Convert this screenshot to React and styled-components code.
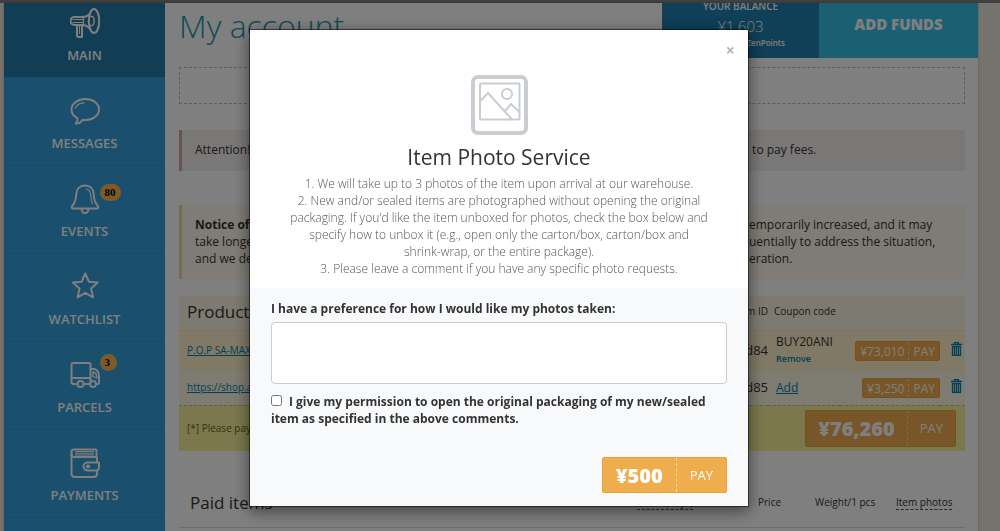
import React, { useState } from "react";
import styled, { createGlobalStyle } from "styled-components";

const MENU = [
  { name: "Main", icon: "horn", active: true },
  { name: "Messages", icon: "bubble" },
  { name: "Events", icon: "bell", badge: "80" },
  { name: "Watchlist", icon: "star" },
  { name: "Parcels", icon: "truck", badge: "3", raised: true },
  { name: "Payments", icon: "wallet" },
];

const ICONS = {
  horn: (
    <>
      <ellipse cx="24" cy="13" rx="5.2" ry="12" />
      <ellipse cx="21.5" cy="13" rx="2.6" ry="4.6" strokeWidth="1.4" />
      <path d="M20.500 4.500C19 7.500 16 9 12 9H4.500a2.500 2.500 0 0 0 0 8H13c3 .3 5.800 2 7.500 4.500" />
      <path d="M2.500 11.500h11M2.500 14.500h11M13.500 9v8" strokeWidth="1.2" />
      <path d="M7 17.500v10a1.500 1.500 0 0 0 1.500 1.500h3.500v-11" />
      <path d="M9.500 18v8" strokeWidth="1" />
    </>
  ),
  bubble: (
    <>
      <path d="M15.500 3C8 3 1.500 7.500 1.500 13.500c0 4 2.500 7 6 8.700.3 1.800-.2 3.600-1.800 5.300 3 .2 5.300-1.400 6.800-3.800 1 .2 2 .3 3 .3C23 24 29 19.500 29 13.500S23 3 15.500 3Z" />
      <path d="M5.500 12.500c.5-3.500 4.500-5.500 9-5.700" strokeWidth="1.300" />
    </>
  ),
  bell: (
    <>
      <path d="M15 1.500C9.500 1.500 6.500 5 6.300 10c-.2 5.500-.8 8.500-4.300 12.200-.8 1 0 2.300 1 2.300h24c1 0 1.800-1.300 1-2.300C24.500 18.500 23.900 15.500 23.700 10 23.500 5 20.500 1.500 15 1.500Z" />
      <path d="M11.500 25c.3 3 1.500 4.200 3.500 4.200s3.200-1.200 3.500-4.200" />
      <path d="M16 5c3 .5 4.500 2.500 4.700 6 .1 4 .6 6.500 2 9" strokeWidth="1.200" />
    </>
  ),
  star: <path d="m15.300 1.500 3.600 8.200 8.900.9-6.700 6 2 8.800-7.800-4.600-7.700 4.600 1.900-8.800-6.700-6 8.900-.9Z" />,
  truck: (
    <>
      <path d="M6.500 24H3.500a2 2 0 0 1-2-2V4.500A1.500 1.500 0 0 1 3 3h16a1.500 1.500 0 0 1 1.500 1.500V22M14 24h5" />
      <path d="M1.500 18h19" />
      <path d="M20.500 9h3.500c3 0 5 3.500 5 7.500v6c0 1-.5 1.500-1.300 1.500H27" />
      <path d="M23 12v4.500l4 1.500c-.2-3.500-1.500-5.800-4-6Z" strokeWidth="1.300" />
      <circle cx="10.500" cy="24" r="3" />
      <circle cx="23" cy="24" r="3" />
    </>
  ),
  wallet: (
    <>
      <path d="M3.500 1.500h22a1 1 0 0 1 1 1V9H4C2.500 9 1.500 7.500 1.500 6V4c0-1.500 1-2.500 2-2.500Z" />
      <path d="M5 3.500h19M5 5.200h19M5 7h19" strokeWidth="1.100" />
      <path d="M1.500 5v20.500c0 2 1.500 3.500 3.500 3.500h18.500c2 0 3.500-1.500 3.500-3.500v-3M26.500 9c.4.500.5 1 .5 2v3" />
      <path d="M29 14.500H17.500a4 4 0 0 0 0 8H27c1.500-.5 2-1.500 2-3Z" />
      <circle cx="18" cy="18.500" r="1.100" />
    </>
  ),
};

const TrashIcon = () => (
  <svg width="11" height="14" viewBox="0 0 11 14" fill="none" stroke="currentColor" strokeWidth="1.3">
    <path d="M0 2.500h11M3.500 2V.5h4V2" />
    <path d="M1.500 4v9.500h8V4M3.500 4v9M5.500 4v9M7.500 4v9" />
    <path d="M1 4.500h9" />
  </svg>
);

const PhotoIcon = () => (
  <svg width="57" height="60" viewBox="0 0 57 60" fill="none" stroke="#c9cdd2">
    <rect x="2" y="2" width="53" height="56" rx="5" strokeWidth="4" />
    <rect x="9" y="8.500" width="39.500" height="36" rx="1" strokeWidth="2" />
    <path d="M9 26.500 17 18l24 26.500M34 36l6-7 8.500 8" strokeWidth="2" />
    <circle cx="36" cy="19" r="5" strokeWidth="2" />
  </svg>
);

const PayButton = ({ size, price, label }) => (
  <PayBtn type="button" $size={size} aria-label={label}>
    <PayPrice $size={size}>{price}</PayPrice>
    <PayText $size={size}>PAY</PayText>
  </PayBtn>
);

const App = () => {
  const [comment, setComment] = useState("");
  const [allowed, setAllowed] = useState(false);

  return (
    <Page>
      <GlobalStyle />
      <TopBar />
      <Wrap>
        <SideMenu>
          {MENU.map((item) => (
            <MenuItem key={item.name} href="#" $active={item.active}>
              <IconBox>
                <MenuIcon viewBox="0 0 30 30">{ICONS[item.icon]}</MenuIcon>
                {item.badge && <Badge $raised={item.raised}>{item.badge}</Badge>}
              </IconBox>
              <MenuName>{item.name}</MenuName>
            </MenuItem>
          ))}
        </SideMenu>

        <Main>
          <Header>
            <PageTitle>My account</PageTitle>
            <Balance>
              <BalanceName>YOUR BALANCE</BalanceName>
              <BalanceSum>¥1,603</BalanceSum>
              <BalancePoints>and also 100 ZenPoints</BalancePoints>
            </Balance>
            <AddFunds type="button">ADD FUNDS</AddFunds>
          </Header>

          <Content>
            <DashedBox />

            <Alert>
              <AlertLine>
                <span>Attention!</span>
                <span>&nbsp;to pay fees.</span>
              </AlertLine>
            </Alert>

            <Alert $notice>
              <AlertLine>
                <b>Notice of</b>
                <span>emporarily increased, and it may</span>
              </AlertLine>
              <AlertLine>
                <span>take longer</span>
                <span>uentially to address the situation,</span>
              </AlertLine>
              <AlertLine>
                <span>and we deeply</span>
                <span>eration.</span>
              </AlertLine>
            </Alert>

            <Products>
              <colgroup>
                <col />
                <col width="60" />
                <col width="72" />
                <col width="100" />
                <col width="25" />
              </colgroup>
              <thead>
                <tr>
                  <HeadCell $title>Products</HeadCell>
                  <HeadCell $right>Item ID</HeadCell>
                  <HeadCell $coupon>Coupon code</HeadCell>
                  <HeadCell />
                  <HeadCell />
                </tr>
              </thead>
              <tbody>
                <Row $tall>
                  <Cell>
                    <ItemLink href="#">P.O.P SA-MAXIMUM</ItemLink>
                  </Cell>
                  <Cell $right>d84</Cell>
                  <Cell>
                    <Coupon>BUY20ANI</Coupon>
                    <SmallLink href="#">Remove</SmallLink>
                  </Cell>
                  <Cell $right $action>
                    <PayButton size="small" price="¥73,010" label="Pay ¥73,010" />
                  </Cell>
                  <Cell $right $action>
                    <IconButton type="button" aria-label="Delete">
                      <TrashIcon />
                    </IconButton>
                  </Cell>
                </Row>
                <Row>
                  <Cell>
                    <ItemLink href="#">https://shop.asmodee</ItemLink>
                  </Cell>
                  <Cell $right>d85</Cell>
                  <Cell>
                    <AddLink href="#">Add</AddLink>
                  </Cell>
                  <Cell $right $action>
                    <PayButton size="small" price="¥3,250" label="Pay ¥3,250" />
                  </Cell>
                  <Cell $right $action>
                    <IconButton type="button" aria-label="Delete">
                      <TrashIcon />
                    </IconButton>
                  </Cell>
                </Row>
              </tbody>
              <tfoot>
                <tr>
                  <TotalCell colSpan="5">
                    <Total>
                      <span>[*] Please pay</span>
                      <PayButton size="large" price="¥76,260" label="Pay ¥76,260" />
                    </Total>
                  </TotalCell>
                </tr>
              </tfoot>
            </Products>

            <Paid>
              <colgroup>
                <col />
                <col width="54" />
                <col width="126" />
                <col width="121" />
                <col width="57" />
                <col width="81" />
                <col width="69" />
              </colgroup>
              <thead>
                <tr>
                  <PaidHead $title>Paid items</PaidHead>
                  <PaidHead>Name</PaidHead>
                  <PaidHead>Status</PaidHead>
                  <PaidHead>
                    <Hint>Items (days)</Hint>
                  </PaidHead>
                  <PaidHead>Price</PaidHead>
                  <PaidHead>Weight/1 pcs</PaidHead>
                  <PaidHead>
                    <Hint>Item photos</Hint>
                  </PaidHead>
                </tr>
              </thead>
            </Paid>
          </Content>
        </Main>
      </Wrap>

      <Backdrop>
        <Modal role="dialog" aria-labelledby="photo-title">
          <ModalTop>
            <CloseButton type="button" aria-label="Close">
              ×
            </CloseButton>
            <PhotoIcon />
            <ModalTitle id="photo-title">Item Photo Service</ModalTitle>
            <ModalText>
              1. We will take up to 3 photos of the item upon arrival at our warehouse.
              <br />
              2. New and/or sealed items are photographed without opening the original
              <br />
              packaging. If you'd like the item unboxed for photos, check the box below and
              <br />
              specify how to unbox it (e.g., open only the carton/box, carton/box and
              <br />
              shrink-wrap, or the entire package).
              <br />
              3. Please leave a comment if you have any specific photo requests.
            </ModalText>
          </ModalTop>
          <ModalForm onSubmit={(e) => e.preventDefault()}>
            <Label htmlFor="comment">I have a preference for how I would like my photos taken:</Label>
            <TextArea id="comment" value={comment} onChange={(e) => setComment(e.target.value)} />
            <Label>
              <Check type="checkbox" checked={allowed} onChange={(e) => setAllowed(e.target.checked)} />I give my
              permission to open the original packaging of my new/sealed item as specified in the above comments.
            </Label>
            <ModalFooter>
              <PayButton size="medium" price="¥500" label="Pay ¥500" />
            </ModalFooter>
          </ModalForm>
        </Modal>
      </Backdrop>
    </Page>
  );
};

const GlobalStyle = createGlobalStyle`
  * {
    box-sizing: border-box;
  }
  body {
    margin: 0;
    background-color: #ebe6dc;
    color: #333;
    font-family: "Open Sans", sans-serif;
    font-size: 12px;
    line-height: 17px;
  }
  button {
    font-family: inherit;
    cursor: pointer;
  }
`;

const Page = styled.div`
  height: 100vh;
  overflow: hidden;
`;

const TopBar = styled.div`
  height: 3px;
  background-color: #85807c;
`;

const Wrap = styled.div`
  display: flex;
  min-height: 100vh;
  margin: 0 22px 0 4px;
  background-color: #fff;
  box-shadow: 0 0 2px rgba(0, 0, 0, 0.3);
`;

const SideMenu = styled.nav`
  width: 161px;
  flex-shrink: 0;
  background-color: #349fdc;
`;

const MenuItem = styled.a`
  display: flex;
  flex-direction: column;
  align-items: center;
  justify-content: flex-end;
  gap: 7px;
  height: ${(props) => (props.$active ? "75px" : "88px")};
  padding-bottom: 12px;
  border-bottom: 1px solid #2f97d2;
  background-color: ${(props) => (props.$active ? "#237da9" : "transparent")};
  color: #fff;
  text-decoration: none;
`;

const IconBox = styled.div`
  position: relative;
  height: 30px;
`;

const MenuIcon = styled.svg`
  display: block;
  width: 30px;
  height: 30px;
  fill: none;
  stroke: #fff;
  stroke-width: 2;
  stroke-linejoin: round;
`;

const Badge = styled.span`
  position: absolute;
  top: ${(props) => (props.$raised ? "-6px" : "0")};
  left: 30px;
  min-width: 17px;
  padding: 0 5px;
  border-radius: 9px;
  background-color: #ffb452;
  color: #000;
  font-family: "Liberation Serif", serif;
  font-size: 11px;
  font-weight: bold;
`;

const MenuName = styled.span`
  font-size: 13px;
  font-weight: 600;
  line-height: 20px;
  text-transform: uppercase;
`;

const Main = styled.main`
  flex: 1;
  min-width: 0;
`;

const Header = styled.header`
  display: flex;
  height: 55px;
  padding-left: 14px;
`;

const PageTitle = styled.h1`
  flex: 1;
  margin: 0;
  color: #1d93a8;
  font-size: 32px;
  font-weight: 300;
  line-height: 46px;
`;

const Balance = styled.div`
  display: flex;
  flex-direction: column;
  align-items: center;
  justify-content: flex-end;
  width: 157px;
  padding-bottom: 9px;
  overflow: hidden;
  background-color: #207eb0;
  color: #fff;
  white-space: nowrap;
`;

const BalanceName = styled.span`
  flex-shrink: 0;
  font-size: 10px;
  font-weight: 600;
  line-height: 12px;
`;

const BalanceSum = styled.span`
  flex-shrink: 0;
  margin: 4px 0 1px;
  font-size: 15px;
  font-weight: 300;
  line-height: 20px;
`;

const BalancePoints = styled.span`
  flex-shrink: 0;
  font-size: 8px;
  font-weight: 600;
  line-height: 12px;
`;

const AddFunds = styled.button`
  width: 159px;
  padding: 0 0 13px;
  border: 0;
  background-color: #36bee4;
  color: #fff;
  font-size: 15px;
  font-weight: 800;
`;

const Content = styled.div`
  padding: 9px 13px 0 14px;
`;

const DashedBox = styled.div`
  height: 37px;
  border: 1px dashed #bbb;
`;

const Alert = styled.div`
  margin-top: ${(props) => (props.$notice ? "34px" : "26px")};
  padding: ${(props) => (props.$notice ? "11px 0 12px 13px" : "11px 0 13px 13px")};
  border-left: 3px solid ${(props) => (props.$notice ? "#e4dea0" : "#d0a4a8")};
  background-color: ${(props) => (props.$notice ? "#fcf8e8" : "#f5eeee")};
`;

const AlertLine = styled.div`
  display: grid;
  grid-template-columns: 1fr 216px;
  white-space: nowrap;
`;

const Products = styled.table`
  width: 100%;
  margin-top: 17px;
  border-collapse: collapse;
  table-layout: fixed;
  background-color: #fffbe6;
`;

const HeadCell = styled.th`
  height: 34px;
  padding: 0 0 2px;
  padding-left: ${(props) => (props.$title ? "8px" : props.$coupon ? "6px" : "0")};
  border-bottom: 1px solid #f3e9c4;
  background-color: #faf6e2;
  font-size: ${(props) => (props.$title ? "17px" : "10px")};
  font-weight: ${(props) => (props.$title ? 500 : 400)};
  text-align: ${(props) => (props.$right ? "right" : "left")};
  white-space: nowrap;
`;

const Row = styled.tr`
  height: ${(props) => (props.$tall ? "40px" : "35px")};
  background-color: ${(props) => (props.$tall ? "#fff2cc" : "#fdf7e0")};
`;

const Cell = styled.td`
  padding: 0;
  padding-top: ${(props) => (props.$action ? "2px" : "0")};
  padding-left: ${(props) => (props.$right ? "0" : "8px")};
  font-size: 13px;
  text-align: ${(props) => (props.$right ? "right" : "left")};
  white-space: nowrap;

  &:last-child {
    padding-right: 3px;
  }
`;

const ItemLink = styled.a`
  color: #0082b4;
  font-size: 10px;
`;

const Coupon = styled.div`
  font-size: 12px;
`;

const SmallLink = styled.a`
  display: block;
  color: #0082b4;
  font-size: 9px;
  font-weight: 600;
  text-decoration: none;
`;

const AddLink = styled.a`
  color: #0082b4;
  font-size: 12px;
`;

const IconButton = styled.button`
  padding: 0;
  border: 0;
  background: none;
  color: #0082b4;
  line-height: 0;
`;

const TotalCell = styled.td`
  padding: 0 9px 0 8px;
  border-top: 1px dashed #c8bd88;
  background-color: #f6f09a;
`;

const Total = styled.div`
  display: flex;
  align-items: center;
  justify-content: space-between;
  height: 45px;
  color: #6d6420;
  font-size: 10px;
`;

// small - table rows, medium - modal, large - total row
const PAY_SIZES = {
  small: { height: 20, pad: 4, price: 12, weight: 400, pay: 12 },
  medium: { height: 36, pad: 13, price: 20, weight: 800, pay: 13 },
  large: { height: 37, pad: 12, price: 20, weight: 800, pay: 13 },
};

const PayBtn = styled.button`
  display: inline-flex;
  align-items: stretch;
  height: ${(props) => PAY_SIZES[props.$size].height}px;
  padding: 0;
  border: 1px solid #e8a23d;
  border-radius: 2px;
  background-color: #f0ad4e;
  color: #fff;
  vertical-align: middle;
`;

const PayPrice = styled.span`
  display: flex;
  align-items: center;
  padding: 0 ${(props) => PAY_SIZES[props.$size].pad}px;
  border-right: 1px dashed #f8d6a6;
  font-size: ${(props) => PAY_SIZES[props.$size].price}px;
  font-weight: ${(props) => PAY_SIZES[props.$size].weight};
`;

const PayText = styled.span`
  display: flex;
  align-items: center;
  padding: 0 ${(props) => PAY_SIZES[props.$size].pad}px;
  font-size: ${(props) => PAY_SIZES[props.$size].pay}px;
`;

const Paid = styled.table`
  width: 100%;
  margin-top: 27px;
  border-collapse: collapse;
  table-layout: fixed;
`;

const PaidHead = styled.th`
  height: 50px;
  padding: ${(props) => (props.$title ? "0 11px" : "0")};
  border-bottom: 1px solid #ddd;
  font-size: ${(props) => (props.$title ? "17px" : "10px")};
  font-weight: ${(props) => (props.$title ? 500 : 400)};
  text-align: left;
  white-space: nowrap;
`;

const Hint = styled.span`
  border-bottom: 1px dashed #555;
`;

const Backdrop = styled.div`
  position: fixed;
  inset: 0;
  padding: 29px 2px 0 0;
  overflow: hidden;
  background-color: rgba(0, 0, 0, 0.5);
`;

const Modal = styled.div`
  width: 100%;
  max-width: 500px;
  margin: 0 auto;
  border: 1px solid rgba(0, 0, 0, 0.5);
  background-color: #f8f9fb;
  background-clip: padding-box;
  box-shadow: 0 4px 14px rgba(0, 0, 0, 0.5);
`;

const ModalTop = styled.div`
  position: relative;
  display: flex;
  flex-direction: column;
  align-items: center;
  padding: 45px 21px 11px;
  background-color: #fff;
`;

const CloseButton = styled.button`
  position: absolute;
  top: 12px;
  right: 13px;
  padding: 0;
  border: 0;
  background: none;
  color: #b5b5b5;
  font-size: 16px;
  font-weight: 700;
  line-height: 16px;
`;

const ModalTitle = styled.h2`
  margin: 10px 0 6px;
  font-size: 21px;
  font-weight: 400;
  line-height: 24px;
`;

const ModalText = styled.p`
  margin: 0;
  color: #555;
  font-weight: 300;
  text-align: center;
`;

const ModalForm = styled.form`
  padding: 12px 21px 13px;
`;

const Label = styled.label`
  display: block;
  font-weight: 700;
`;

const TextArea = styled.textarea`
  display: block;
  width: 100%;
  height: 62px;
  margin: 5px 0 9px;
  border: 1px solid #ccc;
  border-radius: 4px;
  background-color: #fff;
  font: inherit;
  resize: none;
`;

const Check = styled.input`
  width: 11px;
  height: 11px;
  margin: 0 7px 0 0;
`;

const ModalFooter = styled.div`
  display: flex;
  justify-content: flex-end;
  margin-top: 30px;
`;

export default App;
